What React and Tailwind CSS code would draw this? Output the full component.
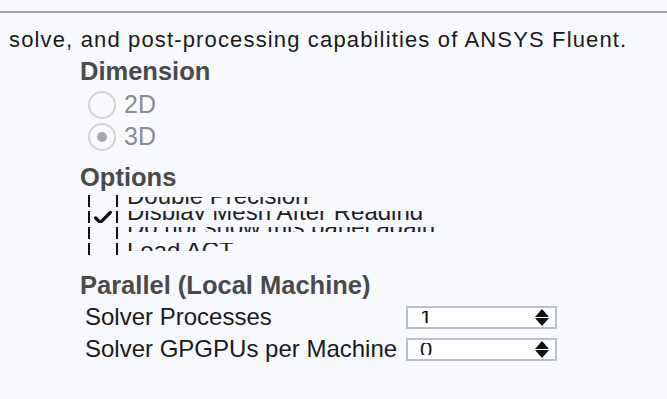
import { Check } from 'lucide-react';

// each option is clipped to a thin band of the label, as in the screenshot
const options = [
  { label: 'Double Precision', checked: false, clip: 'h-[7px] mt-[2px]', shift: '-mt-[15px]' },
  { label: 'Display Mesh After Reading', checked: true, clip: 'h-[10px] -mt-[1px]', shift: '-mt-[12px]' },
  { label: 'Do not show this panel again', checked: false, clip: 'h-[5px] mt-[0px]', shift: '-mt-[14px]' },
  { label: 'Load ACT', checked: false, clip: 'h-[9px] -mt-[1px]', shift: '-mt-[5px]' },
];

const Radio = ({ label, checked }) => (
  <div className="flex items-center h-[32px] gap-[8px]">
    <span className="w-[28px] h-[28px] rounded-full border-2 border-[#d4d4d4] flex items-center justify-center">
      {checked && <span className="w-[10px] h-[10px] rounded-full bg-[#a8a8a8]" />}
    </span>
    <span className="text-[25px] text-[#8c8c8c]">{label}</span>
  </div>
);

const Spinner = ({ value }) => (
  <div className="w-[151px] h-[23px] border-2 border-[#b8c0cc] bg-white flex items-center justify-between pl-[12px] pr-[5px] overflow-hidden">
    <span className="h-[12px] overflow-hidden flex items-center">
      <span className="text-[22px] leading-[23px] text-[#111]">{value}</span>
    </span>
    <svg width="16" height="19" viewBox="0 0 16 19">
      <path d="M8 1 L15 9 L1 9 Z" fill="#111" />
      <path d="M1 10 L15 10 L8 18 Z" fill="#111" />
    </svg>
  </div>
);

export default function App() {
  return (
    <div className="w-[667px] h-[399px] bg-[#f8f9fd] overflow-hidden font-['Liberation_Sans',Arial,sans-serif]">
      <div className="h-[11px]" />
      <div className="border-t-2 border-[#a4a4a4]" />
      <p className="pl-[9px] pt-[14px] text-[22px] leading-[26px] text-[#1a1a1a] tracking-[1.15px]">
        solve, and post-processing capabilities of ANSYS Fluent.
      </p>

      <div className="pl-[80px]">
        <h3 className="mt-[3px] text-[25.5px] leading-[30px] font-bold text-[#4a4a4a]">Dimension</h3>
        <div className="pl-[8px] mt-[3px]">
          <Radio label="2D" />
          <Radio label="3D" checked />
        </div>

        <h3 className="mt-[9px] text-[25.5px] leading-[30px] font-bold text-[#4a4a4a]">Options</h3>
        <div className="flex flex-col gap-[4px] mt-[3px] pl-[8px]">
          {options.map((o) => (
            <div key={o.label} className="flex h-[12px] overflow-hidden">
              <div className="w-[30px] border-l-2 border-r-2 border-[#111] flex items-center justify-center shrink-0">
                {o.checked && <Check size={22} strokeWidth={3.5} className="text-[#111] -mb-[2px]" />}
              </div>
              <div className={`ml-[9px] overflow-hidden ${o.clip}`}>
                <div className={`${o.shift} text-[24px] leading-[28px] text-[#222] whitespace-nowrap`}>{o.label}</div>
              </div>
            </div>
          ))}
        </div>

        <h3 className="mt-[15px] text-[25.5px] leading-[30px] font-bold text-[#4a4a4a]">Parallel (Local Machine)</h3>
        <div className="pl-[5px] mt-[1px]">
          <div className="flex items-center h-[32px]">
            <span className="w-[321px] text-[24px] text-[#1a1a1a]">Solver Processes</span>
            <Spinner value="1" />
          </div>
          <div className="flex items-center h-[32px]">
            <span className="w-[321px] text-[24px] text-[#1a1a1a]">Solver GPGPUs per Machine</span>
            <Spinner value="0" />
          </div>
        </div>
      </div>
    </div>
  );
}
